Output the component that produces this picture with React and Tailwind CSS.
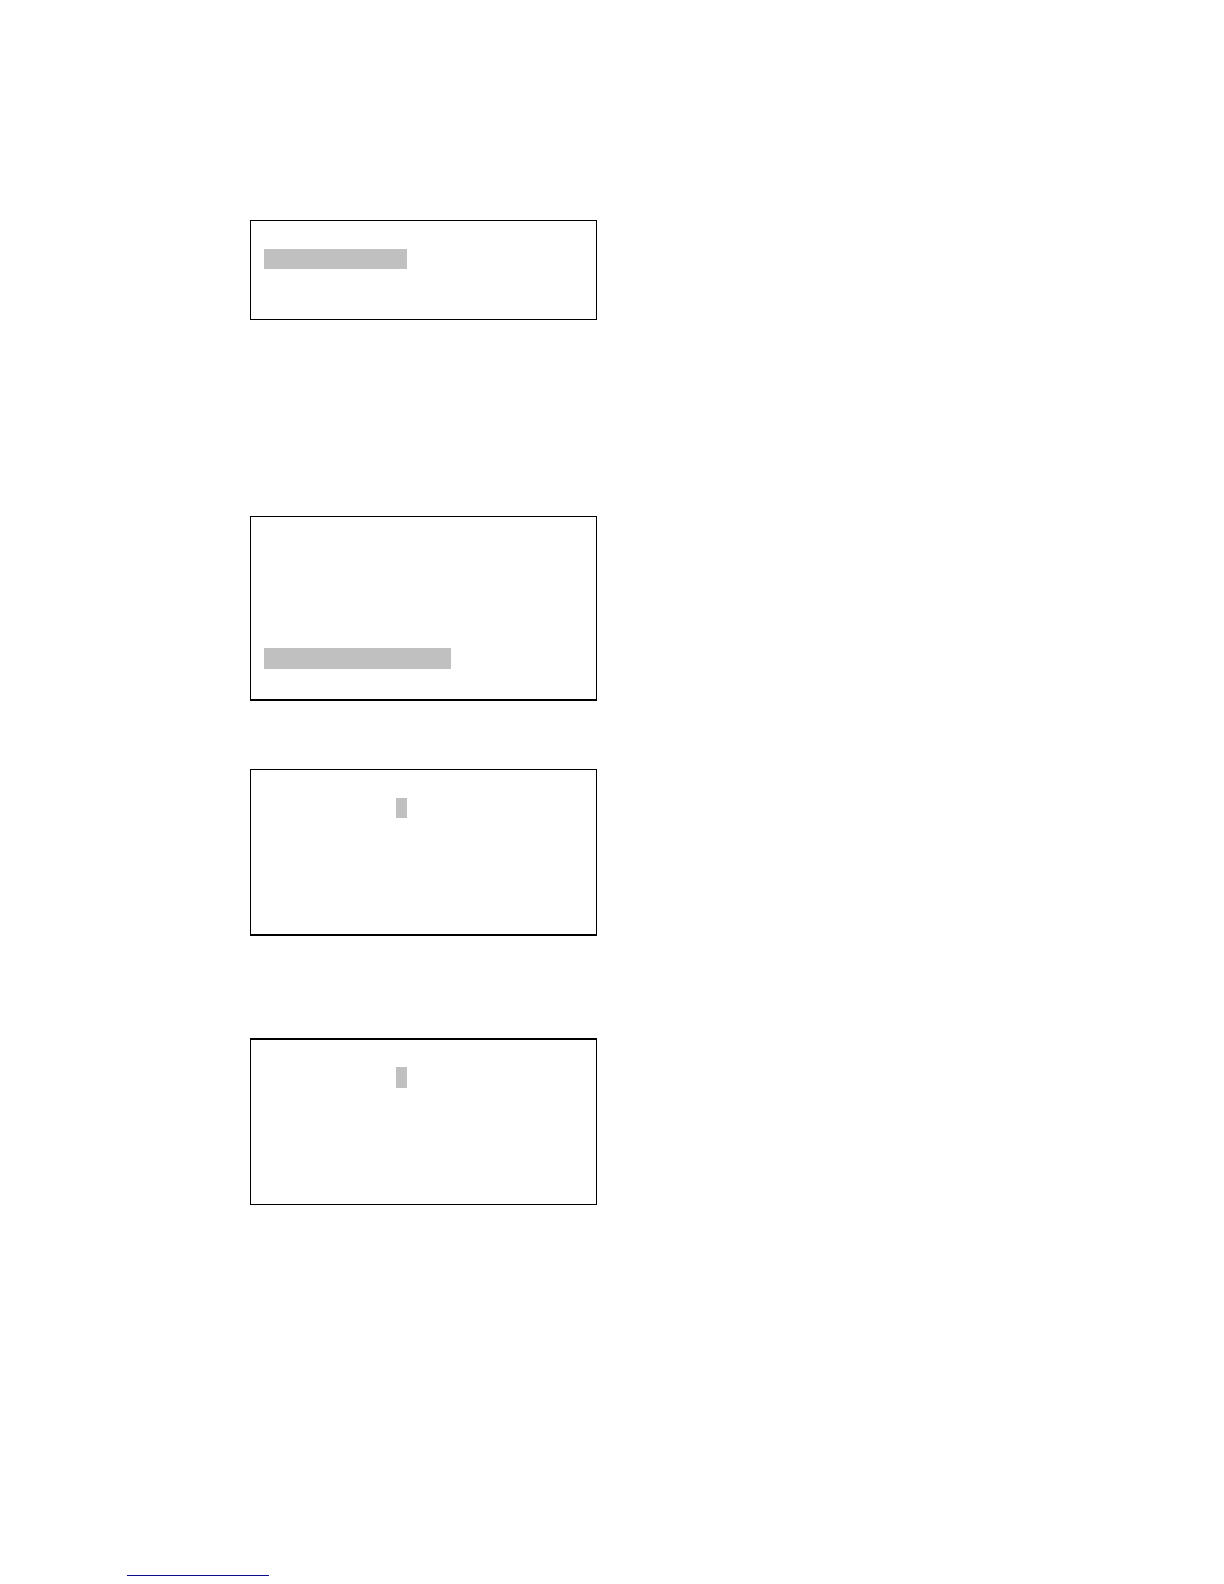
import React from 'react';

const screens = [
  {
    id: 'menu',
    frame: 'border pt-7 pb-[50px] pl-[13px]',
    cursor: 'w-[143px] h-5',
  },
  {
    id: 'submenu',
    frame: 'mt-[196px] border border-b-2 pt-[131px] pb-[30px] pl-[13px]',
    cursor: 'w-[187px] h-[21px]',
  },
  {
    id: 'first-value',
    frame: 'mt-[68px] border border-b-2 pt-7 pb-[116px] pl-[145px]',
    cursor: 'w-[11px] h-5',
  },
  {
    id: 'second-value',
    frame: 'mt-[102px] border border-t-2 pt-[27px] pb-[116px] pl-[145px]',
    cursor: 'w-[11px] h-[21px]',
  },
];

const Screen = ({ frame, cursor }) => (
  <section className={`w-[347px] border-black ${frame}`}>
    <div className={`bg-[#c0c0c0] ${cursor}`} />
  </section>
);

export default function App() {
  return (
    <div className="min-h-screen bg-white pt-[220px] pb-2">
      <main className="flex flex-col pl-[250px]">
        {screens.map(screen => (
          <Screen key={screen.id} frame={screen.frame} cursor={screen.cursor} />
        ))}
      </main>
      <footer className="mt-[370px] pl-[127px]">
        <hr className="h-px w-[142px] border-0 bg-[#0c0c8c]" />
      </footer>
    </div>
  );
}
